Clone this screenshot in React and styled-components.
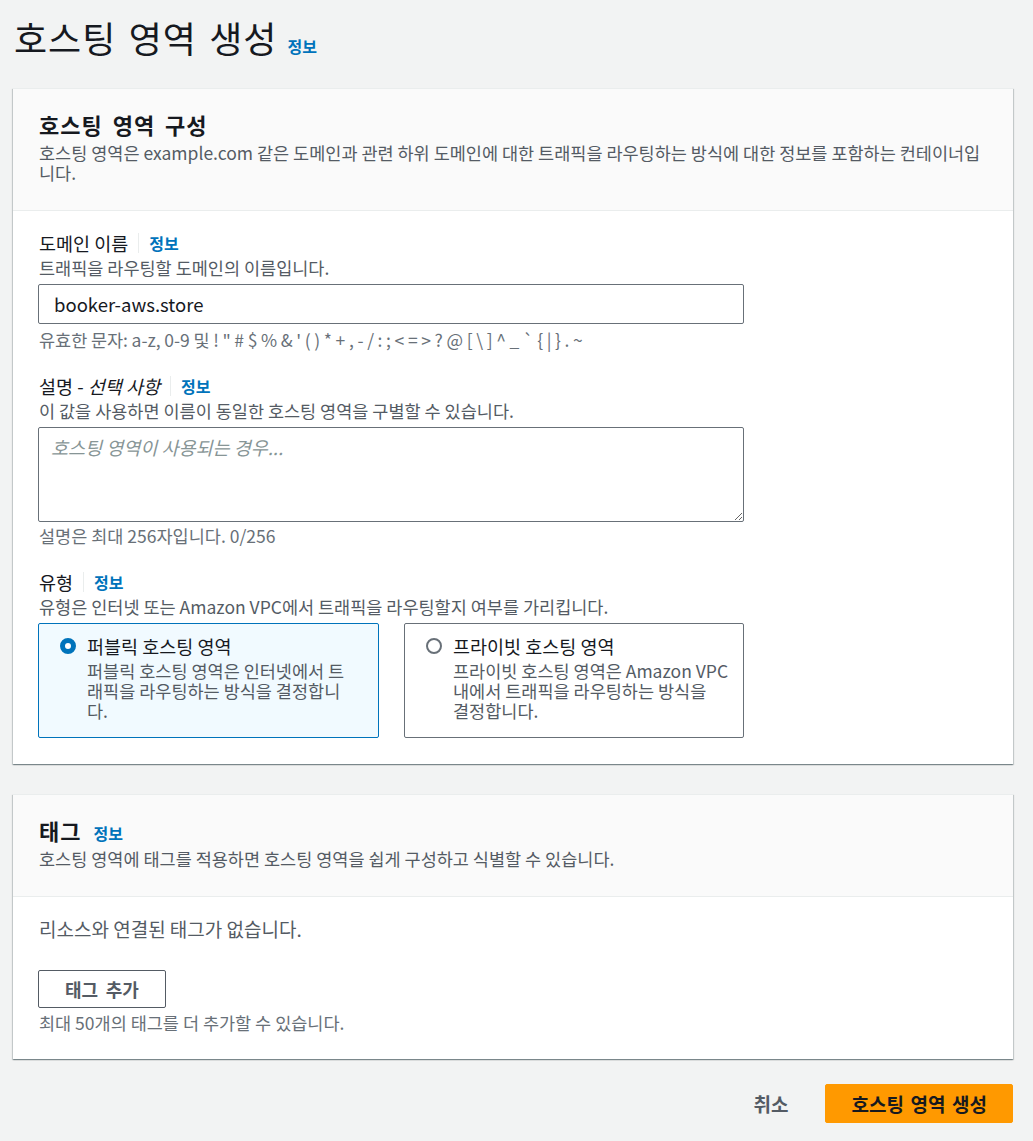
import React from "react";
import styled, { createGlobalStyle } from "styled-components";

const GlobalStyle = createGlobalStyle`
  body {
    margin: 0;
    background: #f2f3f3;
    font-family: "Noto Sans CJK KR", "Noto Sans", sans-serif;
    color: #16191f;
  }
  * {
    box-sizing: border-box;
  }
`;

const Page = styled.div`
  padding: 17px 20px 19px 13px;
`;

const PageHeader = styled.div`
  display: flex;
  align-items: baseline;
  gap: 10px;
  padding-left: 1px;
`;

const H1 = styled.h1`
  margin: 0;
  font-size: 36px;
  line-height: 40px;
  font-weight: 400;
  letter-spacing: 1px;
  word-spacing: 0.09em;
  color: #16191f;
`;

const Info = styled.a`
  color: #0073bb;
  font-weight: 700;
  font-size: 16px;
  line-height: 20px;
  letter-spacing: 0;
  word-spacing: normal;
  text-decoration: none;
`;

const Container = styled.section`
  background: #fff;
  margin-top: ${(p) => p.$gap}px;
  box-shadow: 0 1px 1px 0 rgba(0, 28, 36, 0.3),
    1px 1px 1px 0 rgba(0, 28, 36, 0.15), -1px 1px 1px 0 rgba(0, 28, 36, 0.15);
  border-top: 1px solid #eaeded;
`;

const ContainerHeader = styled.div`
  background: #fafafa;
  border-bottom: 1px solid #eaeded;
  padding: 21px 24px 27px 26px;
`;

const Title = styled.h2`
  margin: 0;
  display: flex;
  align-items: baseline;
  gap: 12px;
  font-size: 22px;
  line-height: 28px;
  font-weight: 700;
  letter-spacing: 1px;
  word-spacing: 0.18em;
  color: #16191f;
`;

const HeaderDesc = styled.p`
  margin: 5px 0 0;
  font-size: 17.5px;
  line-height: 20px;
  color: #545b64;
`;

const ContainerBody = styled.div`
  padding: ${(p) => p.$pad || "20px 25px 26px"};
`;

const Field = styled.div`
  max-width: 706px;
  & + & {
    margin-top: 24px;
  }
`;

const LabelRow = styled.div`
  display: flex;
  align-items: center;
  height: 24px;
`;

const Label = styled.label`
  font-size: 18.5px;
  line-height: 24px;
  color: #16191f;
  padding-left: 1px;

  em {
    font-style: italic;
  }
`;

const Divider = styled.span`
  width: 1px;
  height: 20px;
  background: #eaeded;
  margin: 0 10px;
`;

const Desc = styled.div`
  margin-top: 3px;
  font-size: 17.5px;
  line-height: 20px;
  color: #545b64;
  padding-left: 1px;
`;

const Constraint = styled.div`
  margin-top: ${(p) => p.$top || 6}px;
  font-size: 17.5px;
  line-height: 20px;
  color: #687078;
  padding-left: 1px;
  word-spacing: ${(p) => (p.$tight ? "-0.3px" : "normal")};
`;

const TextInput = styled.input`
  display: block;
  width: 100%;
  height: 40px;
  margin-top: 6px;
  padding: 0 15px;
  border: 1px solid #687078;
  border-radius: 2px;
  background: #fff;
  font-family: inherit;
  font-size: 18.5px;
  color: #16191f;
  outline: none;
`;

const TextArea = styled.textarea`
  display: block;
  width: 100%;
  height: 95px;
  margin-top: 6px;
  padding: 8px 12px;
  border: 1px solid #687078;
  border-radius: 2px;
  font-family: inherit;
  font-size: 18.5px;
  line-height: 22px;
  color: #16191f;
  outline: none;

  &::placeholder {
    color: #879596;
    font-style: italic;
  }
`;

const TileGrid = styled.div`
  display: grid;
  grid-template-columns: 341px 340px;
  gap: 25px;
  margin-top: 6px;
`;

const Tile = styled.label`
  display: flex;
  gap: 11px;
  padding: 11px ${(p) => (p.$keepAll ? 8 : 20)}px 16px 21px;
  border: 1px solid ${(p) => (p.$checked ? "#0073bb" : "#687078")};
  background: ${(p) => (p.$checked ? "#f1faff" : "#fff")};
  border-radius: 2px;
  cursor: pointer;
`;

const RadioDot = styled.svg`
  flex: none;
  margin-top: 3px;
`;

const TileText = styled.div`
  display: flex;
  flex-direction: column;
  min-width: 0;
`;

const TileTitle = styled.span`
  font-size: 18.5px;
  line-height: 22px;
  color: #16191f;
`;

const TileDesc = styled.span`
  margin-top: 4px;
  font-size: 17.5px;
  line-height: 20px;
  color: #545b64;
  word-break: ${(p) => (p.$keepAll ? "keep-all" : "normal")};
`;

const EmptyText = styled.div`
  font-size: 19px;
  line-height: 22px;
  color: #545b64;
  padding-left: 1px;
`;

const SecondaryButton = styled.button`
  display: block;
  margin-top: 30px;
  height: 38px;
  padding: 0 26px;
  border: 1px solid #545b64;
  border-radius: 2px;
  background: #fff;
  font-family: inherit;
  font-size: 18px;
  font-weight: 700;
  color: #545b64;
  word-spacing: 0.2em;
`;

const Footer = styled.div`
  display: flex;
  justify-content: flex-end;
  align-items: center;
  gap: 17px;
  margin-top: 25px;
`;

const LinkButton = styled.button`
  height: 38px;
  padding: 0 20px;
  border: none;
  background: transparent;
  font-family: inherit;
  font-size: 19px;
  font-weight: 700;
  color: #545b64;
`;

const PrimaryButton = styled.button`
  height: 39px;
  padding: 0 25px;
  border: 1px solid #ff9900;
  border-radius: 2px;
  background: #ff9900;
  font-family: inherit;
  font-size: 19px;
  font-weight: 700;
  color: #16191f;
  word-spacing: 0.12em;
`;

const Radio = ({ checked }) => (
  <RadioDot width="16" height="16" viewBox="0 0 16 16">
    {checked ? (
      <circle cx="8" cy="8" r="5.5" fill="#fff" stroke="#0073bb" strokeWidth="5" />
    ) : (
      <circle cx="8" cy="8" r="7" fill="#fff" stroke="#687078" strokeWidth="2" />
    )}
  </RadioDot>
);

const FieldLabel = ({ children }) => (
  <LabelRow>
    <Label>{children}</Label>
    <Divider />
    <Info href="#">정보</Info>
  </LabelRow>
);

const types = [
  {
    id: "public",
    title: "퍼블릭 호스팅 영역",
    desc: "퍼블릭 호스팅 영역은 인터넷에서 트래픽을 라우팅하는 방식을 결정합니다.",
  },
  {
    id: "private",
    title: "프라이빗 호스팅 영역",
    desc: "프라이빗 호스팅 영역은 Amazon VPC 내에서 트래픽을 라우팅하는 방식을 결정합니다.",
    keepAll: true,
  },
];

export default function App() {
  const [domain, setDomain] = React.useState("booker-aws.store");
  const [comment, setComment] = React.useState("");
  const [type, setType] = React.useState("public");

  return (
    <>
      <GlobalStyle />
      <Page>
        <PageHeader>
          <H1>호스팅 영역 생성</H1>
          <Info href="#">정보</Info>
        </PageHeader>

        <Container $gap={31}>
          <ContainerHeader>
            <Title>호스팅 영역 구성</Title>
            <HeaderDesc>
              호스팅 영역은 example.com 같은 도메인과 관련 하위 도메인에 대한
              트래픽을 라우팅하는 방식에 대한 정보를 포함하는 컨테이너입니다.
            </HeaderDesc>
          </ContainerHeader>
          <ContainerBody>
            <Field>
              <FieldLabel>도메인 이름</FieldLabel>
              <Desc>트래픽을 라우팅할 도메인의 이름입니다.</Desc>
              <TextInput
                value={domain}
                onChange={(e) => setDomain(e.target.value)}
              />
              <Constraint $tight>
                유효한 문자: a-z, 0-9 및 ! " # $ % &amp; ' ( ) * + , - / : ; &lt; = &gt; ? @ [ \ ] ^ _ ` {"{"} | {"}"} . ~
              </Constraint>
            </Field>

            <Field>
              <FieldLabel>
                설명 - <em>선택 사항</em>
              </FieldLabel>
              <Desc>이 값을 사용하면 이름이 동일한 호스팅 영역을 구별할 수 있습니다.</Desc>
              <TextArea
                placeholder="호스팅 영역이 사용되는 경우..."
                value={comment}
                onChange={(e) => setComment(e.target.value)}
              />
              <Constraint $top={4}>
                설명은 최대 256자입니다. {comment.length}/256
              </Constraint>
            </Field>

            <Field>
              <FieldLabel>유형</FieldLabel>
              <Desc>유형은 인터넷 또는 Amazon VPC에서 트래픽을 라우팅할지 여부를 가리킵니다.</Desc>
              <TileGrid>
                {types.map((t) => (
                  <Tile
                    key={t.id}
                    $checked={type === t.id}
                    $keepAll={t.keepAll}
                    onClick={() => setType(t.id)}
                  >
                    <Radio checked={type === t.id} />
                    <TileText>
                      <TileTitle>{t.title}</TileTitle>
                      <TileDesc $keepAll={t.keepAll}>{t.desc}</TileDesc>
                    </TileText>
                  </Tile>
                ))}
              </TileGrid>
            </Field>
          </ContainerBody>
        </Container>

        <Container $gap={30}>
          <ContainerHeader>
            <Title>
              태그 <Info href="#">정보</Info>
            </Title>
            <HeaderDesc>
              호스팅 영역에 태그를 적용하면 호스팅 영역을 쉽게 구성하고 식별할 수 있습니다.
            </HeaderDesc>
          </ContainerHeader>
          <ContainerBody $pad="21px 25px 26px">
            <EmptyText>리소스와 연결된 태그가 없습니다.</EmptyText>
            <SecondaryButton>태그 추가</SecondaryButton>
            <Constraint $top={5}>최대 50개의 태그를 더 추가할 수 있습니다.</Constraint>
          </ContainerBody>
        </Container>

        <Footer>
          <LinkButton>취소</LinkButton>
          <PrimaryButton>호스팅 영역 생성</PrimaryButton>
        </Footer>
      </Page>
    </>
  );
}
